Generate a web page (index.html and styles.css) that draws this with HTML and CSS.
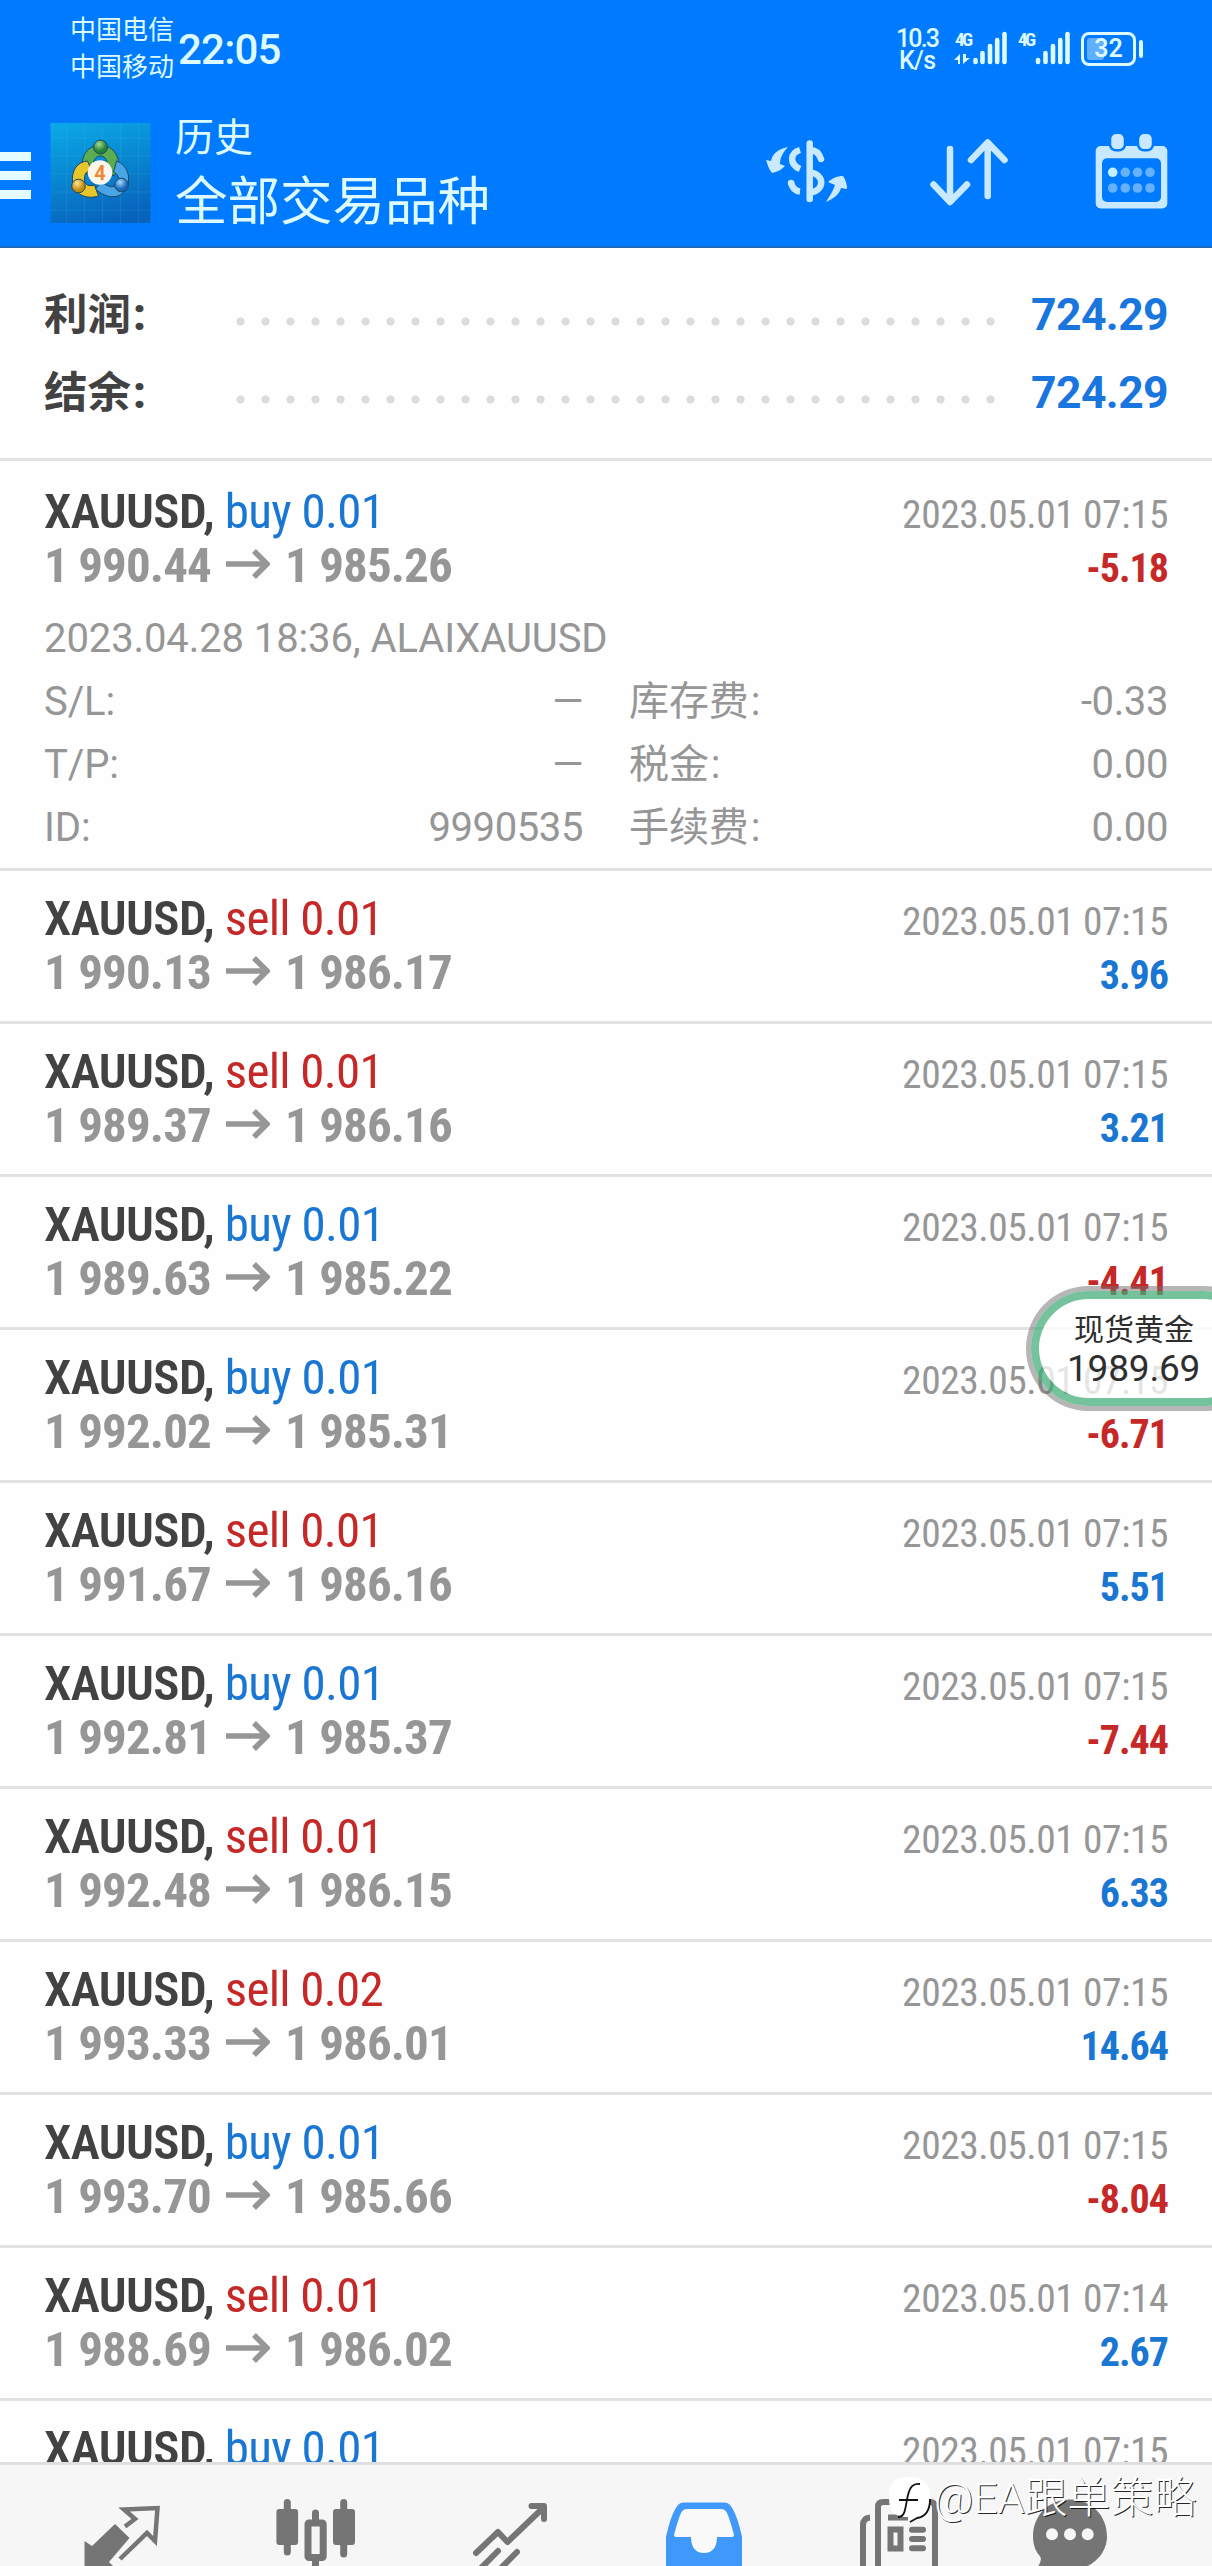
FILE: index.html
```
<!DOCTYPE html>
<html lang="zh-CN">
<head>
<meta charset="utf-8">
<title>历史</title>
<link rel="stylesheet" href="styles.css">
</head>
<body>
<div class="screen">
  <header class="header">
    <div class="status">
      <div class="carriers"><div>中国电信</div><div>中国移动</div></div>
      <div class="clock">22:05</div>
      <svg class="status-icons" width="185" height="60" viewBox="0 0 185 60" fill="#dcfaff">
        <text x="0" y="32" class="net" textLength="44">10.3</text>
        <text x="3" y="54" class="net" textLength="37">K/s</text>
        <text x="59" y="31" class="gen" textLength="18">4G</text>
        <path d="M64 49V39L58 45H62V49ZM67 39V49L74 43H70V39Z"/>
        <g stroke="#dcfaff" stroke-width="4.6" stroke-linecap="round">
          <path d="M79.500 45v2M86.500 38v9M94 31v16M101.200 25v22M108.500 19v28"/>
          <path d="M142 45v2M149.500 38v9M157 31v16M164.300 25v22M171.500 19v28"/>
        </g>
        <text x="122" y="31" class="gen" textLength="18">4G</text>
      </svg>
      <div class="battery"><span class="battery-level"></span><span class="battery-text">32</span></div>
      <span class="battery-tip"></span>
    </div>
    <div class="toolbar">
      <div class="menu"><i></i><i></i><i></i></div>
      <svg class="logo" width="101" height="100" viewBox="0 0 100 100">
        <defs>
          <linearGradient id="sky" x1="0.2" y1="0" x2="0.5" y2="1"><stop offset="0" stop-color="#0ba6e6"/><stop offset="0.5" stop-color="#0886d0"/><stop offset="1" stop-color="#0863bd"/></linearGradient>
          <radialGradient id="ballG" cx="0.4" cy="0.3"><stop offset="0" stop-color="#a5dc8e"/><stop offset="1" stop-color="#25803a"/></radialGradient>
          <radialGradient id="ballY" cx="0.4" cy="0.3"><stop offset="0" stop-color="#ffe98a"/><stop offset="1" stop-color="#c48b12"/></radialGradient>
          <radialGradient id="ballB" cx="0.4" cy="0.3"><stop offset="0" stop-color="#a4dcff"/><stop offset="1" stop-color="#1c67b8"/></radialGradient>
        </defs>
        <rect width="100" height="100" fill="url(#sky)"/>
        <path d="M16 0V100M34 0V100M52 0V100M70 0V100M88 0V100M0 15H100M0 33H100M0 51H100M0 69H100M0 87H100" stroke="#5cc4ee" stroke-opacity="0.14"/>
        <g stroke="#1d4766" stroke-width="1">
          <path d="M50 22C36 23 30 33 32 48L42 54C41 39 44 33 50 33C56 33 59 41 58 54L68 50C70 34 64 23 50 22Z" fill="#5aad50"/>
          <path d="M37 38C26 39 21 48 22 59C23 71 36 77 48 73L44 62C37 64 33 61 34 55C34 51 36 48 41 47Z" fill="#e8c62a"/>
          <path d="M66 38C77 42 81 55 76 65C70 77 56 76 45 66L51 58C58 66 66 65 68 59C69 54 67 51 63 49Z" fill="#4aa5e4"/>
          <circle cx="50" cy="24" r="7" fill="url(#ballG)"/>
          <circle cx="28" cy="63" r="6.800" fill="url(#ballY)"/>
          <circle cx="71" cy="62" r="6.800" fill="url(#ballB)"/>
        </g>
        <circle cx="49.500" cy="49.500" r="12.200" fill="#fbf6ee"/>
        <text x="49.500" y="57" text-anchor="middle" class="logo-digit">4</text>
      </svg>
      <div class="titles"><div class="title">历史</div><div class="subtitle">全部交易品种</div></div>
      <div class="actions">
        <svg width="100" height="84" viewBox="0 0 100 84" fill="none" stroke="#c8e9ff" stroke-width="6.500">
          <path d="M56.700 13.500V69" stroke-linecap="round"/>
          <path d="M47 20C37 23 36 34 47 39"/>
          <path d="M38 52C39 58 42 61 47 61.500" stroke-linecap="butt"/>
          <circle cx="38" cy="53" r="3.200" fill="#c8e9ff" stroke="none"/>
          <path d="M57 20C63 20 66 23 68 29" stroke-linecap="round"/>
          <path d="M57 42.500C72 44 72 61 57 62.500"/>
          <g fill="#c8e9ff" stroke="none">
            <path d="M35 17C24 19 19 25 18 31L13 30C15 36 16 39 19 43C24 42 28 40 32 36L27 34C27 28 30 22 35 17Z"/>
            <path d="M73 72C77 65 80 61 82 55L75 52C80 48 84 46 90 46C93 50 94 55 94 59L88 58C86 65 80 69 73 72Z"/>
          </g>
        </svg>
        <svg width="86" height="84" viewBox="0 0 86 84" fill="none" stroke="#c8e9ff" stroke-width="6.500" stroke-linecap="round" stroke-linejoin="round">
          <path d="M24 19V71M7.500 54.500L24 72L41 54.500M61.700 66V13M45 30L61.700 12.500L78.500 30"/>
        </svg>
        <svg width="84" height="84" viewBox="0 0 84 84">
          <rect x="5.700" y="16" width="71.600" height="62.500" rx="5" fill="#c8e9ff"/>
          <rect x="12" y="28.300" width="59" height="43.700" rx="5" fill="#007bff"/>
          <g fill="#c8e9ff" stroke="#007bff" stroke-width="2.500">
            <rect x="20" y="2.800" width="15" height="17.500" rx="6"/><rect x="48" y="2.800" width="15" height="17.500" rx="6"/>
          </g>
          <g fill="#66b1ff">
            <circle cx="22.700" cy="42.300" r="4.800" fill="#c3f0ff"/><circle cx="35.300" cy="42.300" r="4.800"/><circle cx="47.500" cy="42.300" r="4.800"/><circle cx="60" cy="42.300" r="4.800"/>
            <circle cx="22.700" cy="58" r="4.800"/><circle cx="35.300" cy="58" r="4.800"/><circle cx="47.500" cy="58" r="4.800"/><circle cx="60" cy="58" r="4.800"/>
          </g>
        </svg>
      </div>
    </div>
  </header>

  <section class="summary">
    <div class="sum-row"><span class="sum-label">利润<b>:</b></span><span class="dots"></span><span class="sum-value">724.29</span></div>
    <div class="sum-row"><span class="sum-label">结余<b>:</b></span><span class="dots"></span><span class="sum-value">724.29</span></div>
  </section>

  <main class="deals">
    <article class="deal open">
      <div class="line"><span class="symbol">XAUUSD, <span class="buy">buy 0.01</span></span><span class="date">2023.05.01 07:15</span></div>
      <div class="line"><span class="price">1 990.44<svg class="arrow" viewBox="0 0 44 30"><path d="M0 15H41M28 2L41 15L28 28"/></svg>1 985.26</span><span class="profit loss">-5.18</span></div>
      <div class="details">
        <div class="full">2023.04.28 18:36, ALAIXAUUSD</div>
        <div class="pair"><span>S/L:</span><span>—</span></div><div class="pair"><span class="cjk">库存费<b>:</b></span><span>-0.33</span></div>
        <div class="pair"><span>T/P:</span><span>—</span></div><div class="pair"><span class="cjk">税金<b>:</b></span><span>0.00</span></div>
        <div class="pair"><span>ID:</span><span>9990535</span></div><div class="pair"><span class="cjk">手续费<b>:</b></span><span>0.00</span></div>
      </div>
    </article>
    <article class="deal">
      <div class="line"><span class="symbol">XAUUSD, <span class="sell">sell 0.01</span></span><span class="date">2023.05.01 07:15</span></div>
      <div class="line"><span class="price">1 990.13<svg class="arrow" viewBox="0 0 44 30"><path d="M0 15H41M28 2L41 15L28 28"/></svg>1 986.17</span><span class="profit gain">3.96</span></div>
    </article>
    <article class="deal">
      <div class="line"><span class="symbol">XAUUSD, <span class="sell">sell 0.01</span></span><span class="date">2023.05.01 07:15</span></div>
      <div class="line"><span class="price">1 989.37<svg class="arrow" viewBox="0 0 44 30"><path d="M0 15H41M28 2L41 15L28 28"/></svg>1 986.16</span><span class="profit gain">3.21</span></div>
    </article>
    <article class="deal">
      <div class="line"><span class="symbol">XAUUSD, <span class="buy">buy 0.01</span></span><span class="date">2023.05.01 07:15</span></div>
      <div class="line"><span class="price">1 989.63<svg class="arrow" viewBox="0 0 44 30"><path d="M0 15H41M28 2L41 15L28 28"/></svg>1 985.22</span><span class="profit loss">-4.41</span></div>
    </article>
    <article class="deal">
      <div class="line"><span class="symbol">XAUUSD, <span class="buy">buy 0.01</span></span><span class="date">2023.05.01 07:15</span></div>
      <div class="line"><span class="price">1 992.02<svg class="arrow" viewBox="0 0 44 30"><path d="M0 15H41M28 2L41 15L28 28"/></svg>1 985.31</span><span class="profit loss">-6.71</span></div>
    </article>
    <article class="deal">
      <div class="line"><span class="symbol">XAUUSD, <span class="sell">sell 0.01</span></span><span class="date">2023.05.01 07:15</span></div>
      <div class="line"><span class="price">1 991.67<svg class="arrow" viewBox="0 0 44 30"><path d="M0 15H41M28 2L41 15L28 28"/></svg>1 986.16</span><span class="profit gain">5.51</span></div>
    </article>
    <article class="deal">
      <div class="line"><span class="symbol">XAUUSD, <span class="buy">buy 0.01</span></span><span class="date">2023.05.01 07:15</span></div>
      <div class="line"><span class="price">1 992.81<svg class="arrow" viewBox="0 0 44 30"><path d="M0 15H41M28 2L41 15L28 28"/></svg>1 985.37</span><span class="profit loss">-7.44</span></div>
    </article>
    <article class="deal">
      <div class="line"><span class="symbol">XAUUSD, <span class="sell">sell 0.01</span></span><span class="date">2023.05.01 07:15</span></div>
      <div class="line"><span class="price">1 992.48<svg class="arrow" viewBox="0 0 44 30"><path d="M0 15H41M28 2L41 15L28 28"/></svg>1 986.15</span><span class="profit gain">6.33</span></div>
    </article>
    <article class="deal">
      <div class="line"><span class="symbol">XAUUSD, <span class="sell">sell 0.02</span></span><span class="date">2023.05.01 07:15</span></div>
      <div class="line"><span class="price">1 993.33<svg class="arrow" viewBox="0 0 44 30"><path d="M0 15H41M28 2L41 15L28 28"/></svg>1 986.01</span><span class="profit gain">14.64</span></div>
    </article>
    <article class="deal">
      <div class="line"><span class="symbol">XAUUSD, <span class="buy">buy 0.01</span></span><span class="date">2023.05.01 07:15</span></div>
      <div class="line"><span class="price">1 993.70<svg class="arrow" viewBox="0 0 44 30"><path d="M0 15H41M28 2L41 15L28 28"/></svg>1 985.66</span><span class="profit loss">-8.04</span></div>
    </article>
    <article class="deal">
      <div class="line"><span class="symbol">XAUUSD, <span class="sell">sell 0.01</span></span><span class="date">2023.05.01 07:14</span></div>
      <div class="line"><span class="price">1 988.69<svg class="arrow" viewBox="0 0 44 30"><path d="M0 15H41M28 2L41 15L28 28"/></svg>1 986.02</span><span class="profit gain">2.67</span></div>
    </article>
    <article class="deal">
      <div class="line"><span class="symbol">XAUUSD, <span class="buy">buy 0.01</span></span><span class="date">2023.05.01 07:15</span></div>
    </article>
  </main>

  <nav class="nav">
    <svg viewBox="0 0 100 101"><path d="M44 59L58.500 73L38 97L42 101H13.500V76L21 81Z" fill="#757575"/><path d="M54 61.500L64 54L53 44.500L86.500 43L84 76L76 68L49 94" fill="none" stroke="#757575" stroke-width="4.500"/></svg>
    <svg viewBox="0 0 100 101" fill="#757575"><rect x="11.400" y="44" width="21.700" height="36" rx="3"/><rect x="68" y="44" width="22" height="36" rx="3"/><rect x="43" y="58" width="15.200" height="34.500" rx="1" fill="#f6f6f6" stroke="#757575" stroke-width="7"/><path d="M22.300 37.500V87M78.700 37.500V89M50.500 48V56M50.500 95V101" stroke="#757575" stroke-width="7" stroke-linecap="round"/></svg>
    <svg viewBox="0 0 100 101" fill="none" stroke="#757575" stroke-width="6" stroke-linecap="round" stroke-linejoin="round"><path d="M16 88L38 67L47.500 77L83 43M71.500 41H84V54M38 86L20 104M57 87L39 105"/></svg>
    <svg viewBox="0 0 100 101"><path d="M12 101V72C15 58 19 46 24 40Q26 37.500 29 37.500H71Q74 37.500 76 40C81 46 85 58 88 72V101Z" fill="#4098fb"/><path d="M33 44H67Q71 44 73 48C76 55 78 62 80 70Q80 72 78 72H63C63 80 60 88 50 88C40 88 37 80 37 72H22Q20 72 20 70C22 62 24 55 27 48Q29 44 33 44Z" fill="#f9f9f9"/></svg>
    <svg viewBox="0 0 100 101" fill="none" stroke="#757575" stroke-width="6"><path d="M30 101V42Q30 37 35 37H82Q87 37 87 42V101M15 101V60Q15 53 22 52.500M40 52.500H60"/><rect x="42.500" y="64.500" width="10" height="19"/><path d="M64 64.700H75M64 74H75M64 83.300H75" stroke-linecap="round"/></svg>
    <svg viewBox="0 0 100 101"><path d="M50 34.500C71 34.500 87 50 87 71.500C87 88 74 100 62 103H17Q22 97 20.500 92C15 86 13 79 13 71.500C13 50 29 34.500 50 34.500Z" fill="#757575"/><g fill="#f6f6f6"><circle cx="32" cy="69.300" r="6"/><circle cx="50" cy="69.300" r="6"/><circle cx="67.700" cy="69.300" r="6"/></g></svg>
  </nav>

  <div class="quote"><div class="quote-name">现货黄金</div><div class="quote-price">1989.69</div></div>

  <div class="watermark">
    <svg width="44" height="50" viewBox="0 0 44 50"><path d="M21 2C36 2 42 8 42 22C42 36 36 41 29 41L22 47L20 42C6 42 1 36 1 22C1 8 6 2 21 2Z" fill="#fff"/><path d="M10 42C18 42 17 32 20 20C22 12 25 8 32 9M11 25H30M42 24C42 37 36 42 29 43L22 47" fill="none" stroke="#111" stroke-width="1.800"/></svg>
    <span>@EA跟单策略</span>
  </div>
</div>
</body>
</html>
```
FILE: styles.css
```
* { box-sizing: border-box; }
body {
  margin: 0;
  background: #fefefe;
  font-family: Roboto, "Noto Sans CJK SC", sans-serif;
}
.screen {
  position: relative;
  width: 1212px;
  height: 2566px;
  overflow: hidden;
  display: flex;
  flex-direction: column;
}

/* header */
.header {
  flex: none;
  height: 248px;
  background: #007bff;
  border-bottom: 2px solid #2169b8;
  color: #dcfaff;
}
.status {
  height: 100px;
  display: flex;
  align-items: flex-start;
  padding: 12px 0 0 70px;
}
.carriers {
  width: 108px;
  font-size: 26px;
  line-height: 37px;
  white-space: nowrap;
}
.clock {
  font-size: 42px;
  line-height: 75px;
  letter-spacing: -0.8px;
  font-weight: 500;
}
.status-icons { margin: 3px 0 0 auto; }
.net { font: 500 25px Roboto, sans-serif; }
.gen { font: 700 19px "Roboto Condensed", Roboto, sans-serif; }
.battery {
  position: relative;
  width: 55px;
  height: 34px;
  margin-top: 20px;
  border: 3px solid #dcfaff;
  border-radius: 8px;
  display: flex;
  align-items: center;
  justify-content: center;
}
.battery-level {
  position: absolute;
  left: 3px;
  top: 3px;
  width: 17px;
  height: 22px;
  border-radius: 3px;
  background: #61afff;
}
.battery-text {
  position: relative;
  font-size: 25px;
  line-height: 28px;
  font-weight: 600;
}
.battery-tip {
  width: 4px;
  height: 18px;
  margin: 28px 69px 0 3px;
  border-radius: 2px;
  background: #dcfaff;
}
.toolbar { display: flex; height: 146px; align-items: flex-start; }
.menu {
  width: 31px;
  margin: 52px 19px 0 0;
  display: grid;
  gap: 10.5px;
}
.menu i { height: 8.500px; background: #e4fbff; }
.logo { margin-top: 23px; }
.logo-digit { font: 700 20px Roboto, sans-serif; fill: #ee8a35; }
.titles { margin-left: 24px; white-space: nowrap; }
.title { font-size: 39px; line-height: 58px; margin-top: 9px; }
.subtitle { font-size: 52.500px; line-height: 71px; }
.actions { display: flex; margin: 30px 38px 0 auto; }
.actions svg:nth-child(2) { margin: 0 78px 0 73px; }

/* totals */
.summary { flex: none; height: 210px; padding: 28px 44px 26px; }
.sum-row { display: flex; height: 78px; line-height: 78px; }
.sum-label {
  width: 184px;
  font-size: 43.500px;
  line-height: 72px;
  font-weight: 700;
  color: #424242;
  font-family: "Noto Sans CJK SC", sans-serif;
}
.sum-label b, .cjk b { font-family: Roboto, sans-serif; margin-left: 2px; }
.cjk b { font-weight: 400; }
.dots {
  width: 775px;
  height: 25px;
  margin-top: 33px;
  background: radial-gradient(circle, #dcdcdc 3.700px, transparent 4.500px) 0 0 / 25px 25px;
}
.sum-value {
  margin-left: auto;
  font-size: 44.500px;
  font-weight: 700;
  letter-spacing: -0.6px;
  color: #1976df;
}

/* deals */
.deals { flex: none; height: 2004px; overflow: hidden; }
.deal {
  height: 153px;
  padding: 21px 44px 0;
  border-top: 3px solid #e2e2e2;
}
.deal.open { height: 410px; padding-top: 24px; }
.line {
  height: 54px;
  line-height: 54px;
  display: flex;
  justify-content: space-between;
  align-items: baseline;
  white-space: nowrap;
  font-family: "Roboto Condensed", Roboto, sans-serif;
}
.symbol { font-size: 49px; font-weight: 600; letter-spacing: -0.6px; color: #424242; }
.symbol span { font-weight: 400; letter-spacing: -0.7px; }
.buy { color: #1976d2; }
.sell { color: #c62828; }
.price { font-size: 49px; font-weight: 700; letter-spacing: -0.9px; color: #969696; }
.arrow {
  width: 44px;
  height: 30px;
  margin: 0 15px 0 15px;
  vertical-align: 3px;
  fill: none;
  stroke: #969696;
  stroke-width: 5.500px;
}
.date { font-size: 39.500px; letter-spacing: -0.45px; color: #969696; }
.profit { font-size: 40px; font-weight: 700; letter-spacing: -1px; }
.gain { color: #1976d2; }
.loss { color: #c62828; }
.details {
  margin-top: 14px;
  display: grid;
  grid-template-columns: 539px 539px;
  column-gap: 46px;
  font-size: 40px;
  line-height: 63px;
  letter-spacing: -0.1px;
  color: #969696;
}
.full { grid-column: 1 / 3; height: 63px; }
.pair { height: 63px; display: flex; justify-content: space-between; }
.pair span:last-child { letter-spacing: -0.4px; }
.cjk { font-family: "Noto Sans CJK SC", sans-serif; line-height: 57px; }

/* bottom navigation */
.nav {
  flex: none;
  height: 104px;
  border-top: 3px solid #dedede;
  background: #f6f6f6;
  display: grid;
  grid-template-columns: 194px 194.500px 194px 194px 172px 160px;
  padding-left: 71px;
}
.nav svg { width: 100px; height: 101px; }

/* floating quote bubble */
.quote {
  position: absolute;
  left: 1031px;
  top: 1291px;
  width: 230px;
  height: 115px;
  padding: 12px 0 0 28px;
  border: 8px solid rgba(62, 172, 118, 0.72);
  border-radius: 58px;
  box-shadow: 0 0 0 5px rgba(110, 110, 110, 0.5);
  background: rgba(255, 255, 255, 0.75);
  background-clip: padding-box;
  color: #2e2e2e;
  white-space: nowrap;
}
.quote-name { padding-left: 7px; font-size: 30px; line-height: 38px; }
.quote-price { font-size: 37px; line-height: 40px; letter-spacing: -0.2px; }

/* account mark */
.watermark {
  position: absolute;
  left: 888px;
  top: 2475px;
  display: flex;
  color: #fff;
  white-space: nowrap;
  font-size: 43px;
  line-height: 46px;
  font-weight: 300;
  text-shadow: 1px 1px 0 rgba(0, 0, 0, 0.85);
}
.watermark span { margin-left: 2px; }
```
